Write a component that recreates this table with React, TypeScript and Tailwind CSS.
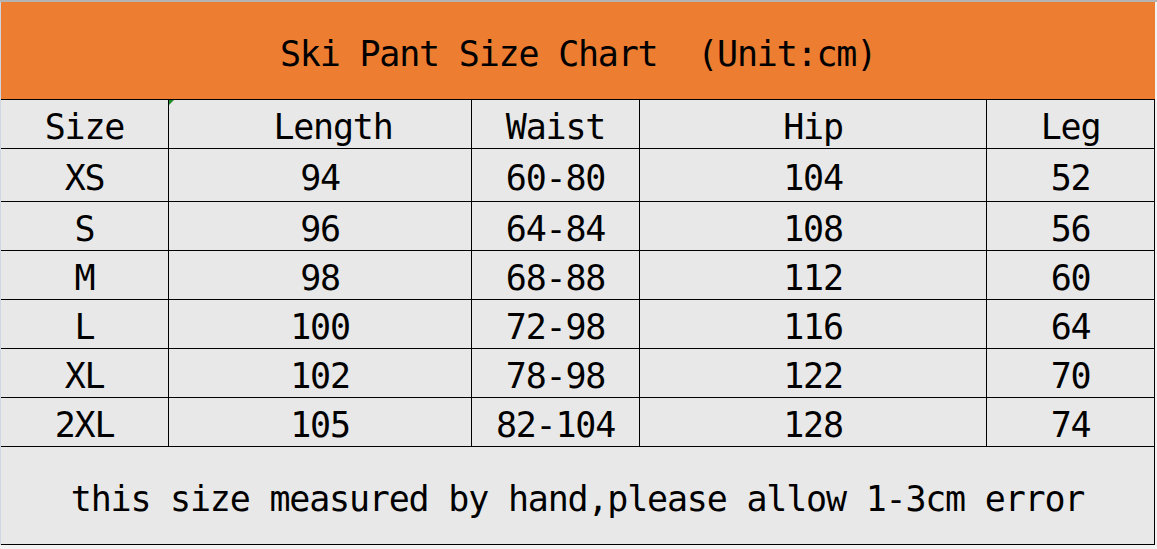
const rows = [
  ["XS", "94", "60-80", "104", "52"],
  ["S", "96", "64-84", "108", "56"],
  ["M", "98", "68-88", "112", "60"],
  ["L", "100", "72-98", "116", "64"],
  ["XL", "102", "78-98", "122", "70"],
  ["2XL", "105", "82-104", "128", "74"],
];

const headers = ["Size", "Length", "Waist", "Hip", "Leg"];

const font = "font-['DejaVu_Sans_Mono',monospace] text-[35px] tracking-[-1.2px] text-black";

export default function App() {
  return (
    <div className="h-[549px] w-[1157px] overflow-hidden bg-[#f3f3f3]">
      <div className="h-[2px] w-full bg-[#b4b4b4]" />
      <div className="flex">
        <div className="w-px bg-[#cfd6e2]" />
        <div
          className={`grid grid-cols-[167px_302px_167px_346px_167px] grid-rows-[97px_48px_52px_48px_48px_48px_48px_48px_97px] gap-px bg-black pr-px pb-px ${font}`}
        >
          <div className="col-span-5 -mr-px flex items-center justify-center bg-[#ed7d31] pt-[8px] whitespace-pre">
            Ski Pant Size Chart  (Unit:cm)
          </div>
          {headers.map((h, i) => (
            <div
              key={h}
              className={`relative flex items-center justify-center bg-[#e8e8e8] pt-[6px] ${i === 1 ? "pl-[26px]" : ""}`}
            >
              {i === 1 && (
                <span className="absolute top-0 left-0 h-0 w-0 border-t-[5px] border-r-[5px] border-t-[#1e8c2a] border-r-transparent" />
              )}
              {h}
            </div>
          ))}
          {rows.map((r) =>
            r.map((c, i) => (
              <div key={r[0] + i} className="flex items-center justify-center bg-[#e8e8e8] pt-[6px]">
                {c}
              </div>
            ))
          )}
          <div className="col-span-5 flex items-center justify-center bg-[#e8e8e8] pt-[8px] whitespace-pre">
            this size measured by hand,please allow 1-3cm error
          </div>
        </div>
      </div>
    </div>
  );
}
